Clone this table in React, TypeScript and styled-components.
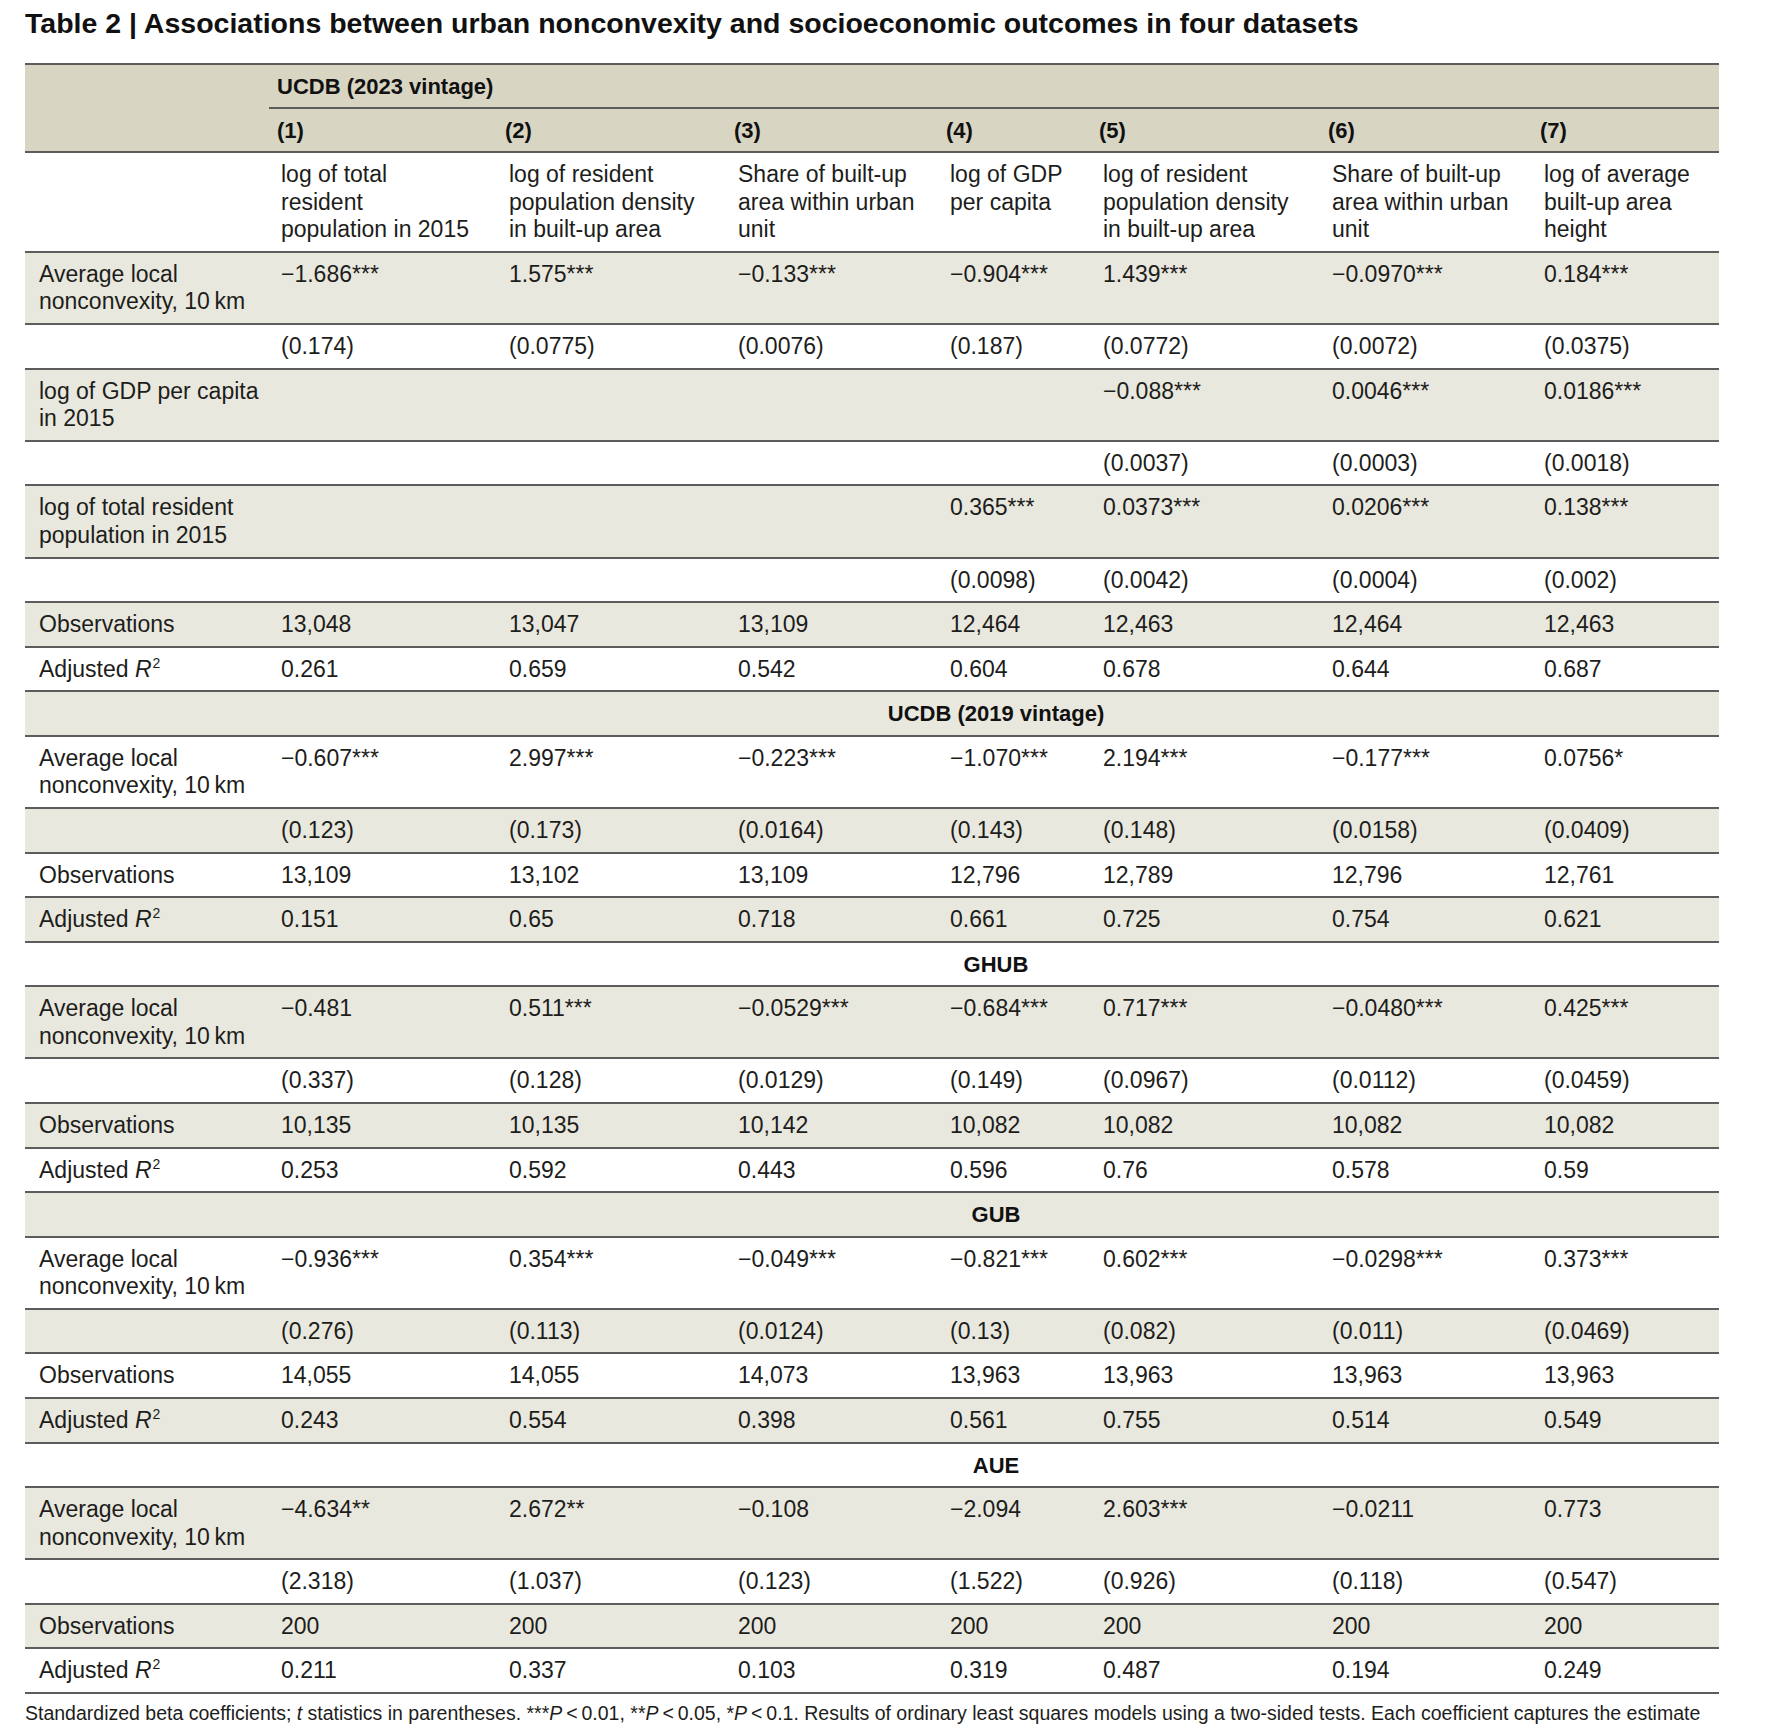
import React from "react";
import styled, { createGlobalStyle } from "styled-components";

const Global = createGlobalStyle`
  html, body { margin: 0; padding: 0; background: #ffffff; }
  body { font-family: "Liberation Sans", Arial, sans-serif; color: #1d1d1b; }
`;

const Page = styled.div`
  padding: 6px 0 0 25px;
`;

const Title = styled.h1`
  margin: 0;
  font-family: "Liberation Sans", Arial, sans-serif;
  font-weight: 700;
  font-size: 28.5px;
  line-height: 34px;
  color: #111;
`;

const Table = styled.table`
  margin-top: 23px;
  width: 1694px;
  table-layout: fixed;
  border-collapse: collapse;
  border-top: 2px solid #5c5c5c;
  font-size: 23px;
  line-height: 27.62px;
`;

const Col = styled.col<{ $w: number }>`
  width: ${(p) => p.$w}px;
`;

const HeadCell = styled.th<{ $line?: boolean; $center?: boolean }>`
  background: #d8d5c3;
  font-weight: 700;
  font-size: 22px;
  line-height: 27.5px;
  text-align: ${(p) => (p.$center ? "center" : "left")};
  vertical-align: top;
  padding: 7.5px 4px 7px 8px;
  border-bottom: ${(p) => (p.$line ? "2px solid #5c5c5c" : "none")};
  color: #111;
`;

const Row = styled.tr<{ $shade?: boolean }>`
  background: ${(p) => (p.$shade ? "#e9e8de" : "#ffffff")};
`;

const Cell = styled.td<{ $label?: boolean }>`
  vertical-align: top;
  padding: 8px 4px 6.95px ${(p) => (p.$label ? 14 : 12)}px;
  border-bottom: 2px solid #5c5c5c;
  white-space: nowrap;
`;

const SectionCell = styled.td`
  vertical-align: top;
  padding: 8px 4px 6.95px 8px;
  border-bottom: 2px solid #5c5c5c;
  text-align: center;
  font-weight: 700;
  font-size: 22px;
  color: #111;
`;

const Line = styled.span`
  display: block;
  white-space: nowrap;
`;

const Sup = styled.sup`
  font-size: 14px;
  line-height: 0;
  vertical-align: 9px;
  margin-left: 1px;
`;

const Note = styled.p`
  margin: 7px 0 0 0;
  font-size: 19.5px;
  line-height: 24px;
  white-space: nowrap;
  color: #1d1d1b;
`;

const widths = [244, 228, 229, 212, 153, 229, 212, 187];

const colHeads: string[][] = [
  ["log of total", "resident", "population in 2015"],
  ["log of resident", "population density", "in built-up area"],
  ["Share of built-up", "area within urban", "unit"],
  ["log of GDP", "per capita"],
  ["log of resident", "population density", "in built-up area"],
  ["Share of built-up", "area within urban", "unit"],
  ["log of average", "built-up area", "height"],
];

type Item =
  | { kind: "section"; title: string }
  | { kind: "data"; label: React.ReactNode; values: string[] };

const AVG = (
  <>
    <Line>Average local</Line>
    <Line>nonconvexity, 10{"\u2009"}km</Line>
  </>
);
const ADJ = (
  <>
    Adjusted <i>R</i>
    <Sup>2</Sup>
  </>
);
const E = "";

const items: Item[] = [
  { kind: "data", label: AVG, values: ["−1.686***", "1.575***", "−0.133***", "−0.904***", "1.439***", "−0.0970***", "0.184***"] },
  { kind: "data", label: "", values: ["(0.174)", "(0.0775)", "(0.0076)", "(0.187)", "(0.0772)", "(0.0072)", "(0.0375)"] },
  {
    kind: "data",
    label: (
      <>
        <Line>log of GDP per capita</Line>
        <Line>in 2015</Line>
      </>
    ),
    values: [E, E, E, E, "−0.088***", "0.0046***", "0.0186***"],
  },
  { kind: "data", label: "", values: [E, E, E, E, "(0.0037)", "(0.0003)", "(0.0018)"] },
  {
    kind: "data",
    label: (
      <>
        <Line>log of total resident</Line>
        <Line>population in 2015</Line>
      </>
    ),
    values: [E, E, E, "0.365***", "0.0373***", "0.0206***", "0.138***"],
  },
  { kind: "data", label: "", values: [E, E, E, "(0.0098)", "(0.0042)", "(0.0004)", "(0.002)"] },
  { kind: "data", label: "Observations", values: ["13,048", "13,047", "13,109", "12,464", "12,463", "12,464", "12,463"] },
  { kind: "data", label: ADJ, values: ["0.261", "0.659", "0.542", "0.604", "0.678", "0.644", "0.687"] },

  { kind: "section", title: "UCDB (2019 vintage)" },
  { kind: "data", label: AVG, values: ["−0.607***", "2.997***", "−0.223***", "−1.070***", "2.194***", "−0.177***", "0.0756*"] },
  { kind: "data", label: "", values: ["(0.123)", "(0.173)", "(0.0164)", "(0.143)", "(0.148)", "(0.0158)", "(0.0409)"] },
  { kind: "data", label: "Observations", values: ["13,109", "13,102", "13,109", "12,796", "12,789", "12,796", "12,761"] },
  { kind: "data", label: ADJ, values: ["0.151", "0.65", "0.718", "0.661", "0.725", "0.754", "0.621"] },

  { kind: "section", title: "GHUB" },
  { kind: "data", label: AVG, values: ["−0.481", "0.511***", "−0.0529***", "−0.684***", "0.717***", "−0.0480***", "0.425***"] },
  { kind: "data", label: "", values: ["(0.337)", "(0.128)", "(0.0129)", "(0.149)", "(0.0967)", "(0.0112)", "(0.0459)"] },
  { kind: "data", label: "Observations", values: ["10,135", "10,135", "10,142", "10,082", "10,082", "10,082", "10,082"] },
  { kind: "data", label: ADJ, values: ["0.253", "0.592", "0.443", "0.596", "0.76", "0.578", "0.59"] },

  { kind: "section", title: "GUB" },
  { kind: "data", label: AVG, values: ["−0.936***", "0.354***", "−0.049***", "−0.821***", "0.602***", "−0.0298***", "0.373***"] },
  { kind: "data", label: "", values: ["(0.276)", "(0.113)", "(0.0124)", "(0.13)", "(0.082)", "(0.011)", "(0.0469)"] },
  { kind: "data", label: "Observations", values: ["14,055", "14,055", "14,073", "13,963", "13,963", "13,963", "13,963"] },
  { kind: "data", label: ADJ, values: ["0.243", "0.554", "0.398", "0.561", "0.755", "0.514", "0.549"] },

  { kind: "section", title: "AUE" },
  { kind: "data", label: AVG, values: ["−4.634**", "2.672**", "−0.108", "−2.094", "2.603***", "−0.0211", "0.773"] },
  { kind: "data", label: "", values: ["(2.318)", "(1.037)", "(0.123)", "(1.522)", "(0.926)", "(0.118)", "(0.547)"] },
  { kind: "data", label: "Observations", values: ["200", "200", "200", "200", "200", "200", "200"] },
  { kind: "data", label: ADJ, values: ["0.211", "0.337", "0.103", "0.319", "0.487", "0.194", "0.249"] },
];

const T = "\u2009";

export default function App() {
  return (
    <>
      <Global />
      <Page>
        <Title>Table 2 | Associations between urban nonconvexity and socioeconomic outcomes in four datasets</Title>
        <Table>
          <colgroup>
            {widths.map((w, i) => (
              <Col key={i} $w={w} />
            ))}
          </colgroup>
          <thead>
            <tr>
              <HeadCell rowSpan={2} $line />
              <HeadCell colSpan={7} $line>
                UCDB (2023 vintage)
              </HeadCell>
            </tr>
            <tr>
              {[1, 2, 3, 4, 5, 6, 7].map((n) => (
                <HeadCell key={n} $line>
                  ({n})
                </HeadCell>
              ))}
            </tr>
          </thead>
          <tbody>
            <Row>
              <Cell $label />
              {colHeads.map((lines, i) => (
                <Cell key={i}>
                  {lines.map((l, j) => (
                    <Line key={j}>{l}</Line>
                  ))}
                </Cell>
              ))}
            </Row>
            {items.map((it, i) =>
              it.kind === "section" ? (
                <Row key={i} $shade={i % 2 === 0}>
                  <Cell $label />
                  <SectionCell colSpan={7}>{it.title}</SectionCell>
                </Row>
              ) : (
                <Row key={i} $shade={i % 2 === 0}>
                  <Cell $label>{it.label}</Cell>
                  {it.values.map((v, j) => (
                    <Cell key={j}>{v}</Cell>
                  ))}
                </Row>
              )
            )}
          </tbody>
        </Table>
        <Note>
          Standardized beta coefficients; <i>t</i> statistics in parentheses. ***<i>P</i>
          {T}&lt;{T}0.01, **<i>P</i>
          {T}&lt;{T}0.05, *<i>P</i>
          {T}&lt;{T}0.1. Results of ordinary least squares models using a two-sided tests. Each coefficient captures
          the estimate
        </Note>
      </Page>
    </>
  );
}
